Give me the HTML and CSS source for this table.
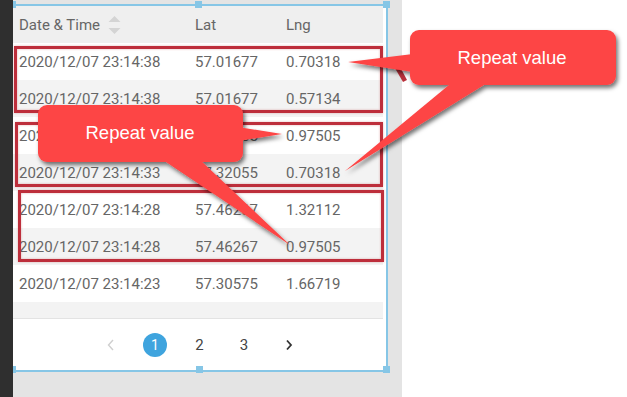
FILE: index.html
```html
<!DOCTYPE html>
<html>
<head>
<meta charset="utf-8">
<link rel="stylesheet" href="styles.css">
</head>
<body>
<div class="app">
  <div class="sidebar"></div>
  <div class="stage">
    <div class="panel">
      <div class="table">
        <div class="row head">
          <div class="cell">Date &amp; Time
            <svg class="sort" width="13" height="18" viewBox="0 0 13 18"><polygon points="6.5,0 12.5,6 0.5,6" fill="#d4d4d4"/><polygon points="0.5,12 12.5,12 6.5,18" fill="#d4d4d4"/></svg>
          </div>
          <div class="cell">Lat</div>
          <div class="cell">Lng</div>
        </div>
        <div class="row"><div class="cell">2020/12/07 23:14:38</div><div class="cell">57.01677</div><div class="cell">0.70318</div></div>
        <div class="row alt"><div class="cell">2020/12/07 23:14:38</div><div class="cell">57.01677</div><div class="cell">0.57134</div></div>
        <div class="row"><div class="cell">2020/12/07 23:14:33</div><div class="cell">57.32055</div><div class="cell">0.97505</div></div>
        <div class="row alt"><div class="cell">2020/12/07 23:14:33</div><div class="cell">57.32055</div><div class="cell">0.70318</div></div>
        <div class="row"><div class="cell">2020/12/07 23:14:28</div><div class="cell">57.46267</div><div class="cell">1.32112</div></div>
        <div class="row alt"><div class="cell">2020/12/07 23:14:28</div><div class="cell">57.46267</div><div class="cell">0.97505</div></div>
        <div class="row"><div class="cell">2020/12/07 23:14:23</div><div class="cell">57.30575</div><div class="cell">1.66719</div></div>
        <div class="row alt partial"></div>
      </div>
      <div class="pager">
        <span class="pg"><svg width="8" height="12" viewBox="0 0 8 12"><polyline points="6,1 1.5,6 6,11" fill="none" stroke="#cfcfcf" stroke-width="1.4"/></svg></span>
        <span class="pg"><span class="current">1</span></span>
        <span class="pg">2</span>
        <span class="pg">3</span>
        <span class="pg"><svg width="8" height="12" viewBox="0 0 8 12"><polyline points="2,1.5 6,6 2,10.5" fill="none" stroke="#333" stroke-width="1.8"/></svg></span>
      </div>
      <span class="handle h-tl"></span>
      <span class="handle h-tm"></span>
      <span class="handle h-tr"></span>
      <span class="handle h-bl"></span>
      <span class="handle h-bm"></span>
      <span class="handle h-br"></span>
    </div>
  </div>
  <div class="blank"></div>
</div>

<svg class="notes" width="627" height="397" viewBox="0 0 627 397">
  <defs>
    <filter id="sh" x="-20%" y="-20%" width="140%" height="160%">
      <feDropShadow dx="2" dy="3" stdDeviation="2" flood-color="#000" flood-opacity="0.55"/>
    </filter>
    <filter id="bx" x="-5%" y="-5%" width="110%" height="110%">
      <feDropShadow dx="0" dy="0" stdDeviation="1" flood-color="#b0303a" flood-opacity="0.35"/>
    </filter>
  </defs>
  <g fill="none" stroke="#bd2e3b" stroke-width="3" filter="url(#bx)">
    <rect x="15.5" y="47.5" width="366" height="64"/>
    <rect x="16.5" y="123.5" width="365" height="62"/>
    <rect x="19.5" y="191.5" width="363" height="69"/>
  </g>
  <polygon points="392,63 398,63 407,80 403,82" fill="#b8303a"/>
  <g filter="url(#sh)" fill="#fd4444">
    <polygon points="348,62 413,54 413,72"/>
    <polygon points="455,80 492,80 345,171"/>
    <rect x="410" y="30" width="206" height="55" rx="9"/>
  </g>
  <g filter="url(#sh)" fill="#fd4444">
    <polygon points="238,127 282,134 238,141"/>
    <polygon points="160,158 198,158 290,245"/>
    <rect x="38" y="105" width="205" height="57" rx="9"/>
  </g>
  <text class="note-text" x="512" y="63.5" text-anchor="middle">Repeat value</text>
  <text class="note-text" x="140" y="138.5" text-anchor="middle">Repeat value</text>
</svg>
</body>
</html>
```
FILE: styles.css
```css
html, body {
  margin: 0;
  padding: 0;
}
body {
  font-family: Roboto, "Liberation Sans", sans-serif;
  position: relative;
  width: 627px;
  height: 397px;
  overflow: hidden;
  background: #fff;
}
.app {
  display: flex;
  height: 397px;
}
.sidebar {
  width: 13px;
  background: #2f2f2f;
}
.stage {
  width: 389px;
  background: #e4e4e4;
  padding-top: 4px;
  box-sizing: border-box;
}
.blank {
  flex: 1;
  background: #fff;
}
.panel {
  position: relative;
  width: 373px;
  height: 364px;
  background: #fff;
  border-top: 2px solid #86c6e6;
  border-right: 2px solid #86c6e6;
  border-bottom: 2px solid #86c6e6;
}
.table {
  width: 370px;
}
.row {
  display: grid;
  grid-template-columns: 176px 91px 1fr;
  height: 37px;
  align-items: center;
}
.row.alt {
  background: #f3f3f3;
}
.row.head {
  background: #efefef;
}
.cell {
  padding-left: 6px;
  font-size: 15px;
  color: #666;
  white-space: nowrap;
  display: flex;
  align-items: center;
}
.sort {
  margin-left: 8px;
}
.row.partial {
  height: 16px;
  border-bottom: 1px solid #e3e3e3;
}
.pager {
  height: 51px;
  display: flex;
  justify-content: center;
  align-items: center;
  font-size: 15px;
  color: #444;
}
.pg {
  width: 44.5px;
  display: flex;
  justify-content: center;
  align-items: center;
}
.current {
  width: 24px;
  height: 24px;
  border-radius: 50%;
  background: #3fa4de;
  color: #fff;
  font-size: 14px;
  display: flex;
  justify-content: center;
  align-items: center;
}
.handle {
  position: absolute;
  width: 7px;
  height: 7px;
  background: #86c6e6;
}
.h-tl { left: 0; top: -5px; width: 3px; }
.h-tm { left: 182px; top: -5px; }
.h-tr { right: -4px; top: -5px; }
.h-bl { left: 0; bottom: -3px; width: 3px; }
.h-bm { left: 183px; bottom: -3px; }
.h-br { right: -4px; bottom: -3px; }
.notes {
  position: absolute;
  left: 0;
  top: 0;
  pointer-events: none;
}
.note-text {
  font-family: "Liberation Sans", Arial, sans-serif;
  font-size: 18.5px;
  fill: #fff;
}
```
